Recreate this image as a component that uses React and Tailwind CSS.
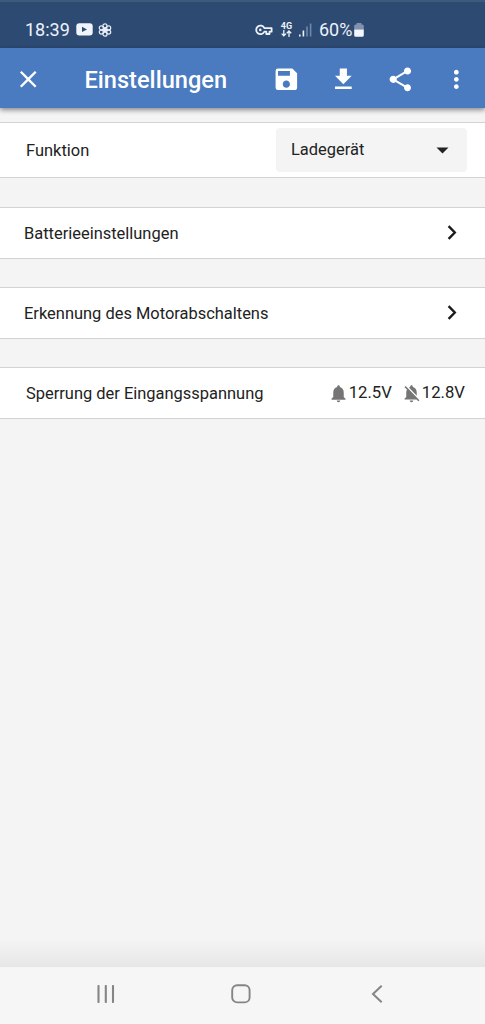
import React from 'react';
import { MdSave, MdGetApp, MdShare, MdMoreVert, MdClose, MdNotifications, MdNotificationsOff } from 'react-icons/md';

const YoutubeIcon = () => (
  <svg width="17" height="13" viewBox="0 0 17 13">
    <rect x="0.3" y="0.3" width="16.4" height="12.2" rx="3" fill="#f1f5fb" />
    <path d="M6 3.8v5.2l5-2.6z" fill="#2d4a73" />
  </svg>
);

const FlowerIcon = () => (
  <svg width="14" height="14" viewBox="0 0 14 14" fill="none" stroke="#e8eef7" strokeWidth="1.2">
    <circle cx="7" cy="2.8" r="2" />
    <circle cx="10.7" cy="4.9" r="2" />
    <circle cx="10.7" cy="9.1" r="2" />
    <circle cx="7" cy="11.2" r="2" />
    <circle cx="3.3" cy="9.1" r="2" />
    <circle cx="3.3" cy="4.9" r="2" />
    <circle cx="7" cy="7" r="1.6" fill="#e8eef7" />
  </svg>
);

const KeyIcon = () => (
  <svg width="18" height="12" viewBox="0 0 18 12" fill="none" stroke="#edf2fa" strokeWidth="1.8" strokeLinejoin="round">
    <path d="M9.4 4.1A4.3 4.3 0 1 0 9.4 7.7H11.3V10H14.5V7.7H16.6V4.1Z" />
    <circle cx="5.3" cy="5.9" r="1.3" fill="#edf2fa" stroke="none" />
  </svg>
);

const DataArrows = () => (
  <svg width="11" height="7" viewBox="0 0 11 7" fill="none" stroke="#edf2fa" strokeWidth="1.3">
    <path d="M2.8 0v5.8M0.6 3.6l2.2 2.3L5 3.6M8 7V1.1M5.8 3.3L8 1l2.2 2.3" />
  </svg>
);

const SignalIcon = () => (
  <svg width="13" height="14" viewBox="0 0 13 14">
    <rect x="0" y="11.5" width="1.6" height="2" fill="#edf2fa" />
    <rect x="3.6" y="7.5" width="1.6" height="6" fill="#edf2fa" />
    <rect x="7.2" y="3.5" width="1.6" height="10" fill="#7188ab" />
    <rect x="10.8" y="0.5" width="1.6" height="13" fill="#7188ab" />
  </svg>
);

const BatteryIcon = () => (
  <svg width="10" height="14" viewBox="0 0 10 14">
    <path d="M2.6 0h4.8v1.4H8.5Q9.8 1.4 9.8 2.9V6.8H0.2V2.9Q0.2 1.4 1.5 1.4h1.1z" fill="#8092af" />
    <path d="M0.2 6.6h9.6v5.7q0 1.5-1.5 1.5H1.7q-1.5 0-1.5-1.5z" fill="#f3f6fb" />
  </svg>
);

const ChevronIcon = () => (
  <svg className="mb-px" width="10" height="15" viewBox="0 0 10 15" fill="none" stroke="#1c1c1c" strokeWidth="2.4">
    <path d="M1.6 1.2L7.8 7.5l-6.2 6.3" />
  </svg>
);

const StatusBar = () => (
  <div className="h-12 bg-[#2d4a73] border-t-2 border-[#3d5a7c] flex items-center pt-[9px] pl-[25px] text-[#edf2fa] text-[18px] leading-none">
    <span className="w-[51px]">18:39</span>
    <YoutubeIcon />
    <span className="ml-[5px]"><FlowerIcon /></span>
    <span className="ml-[143px]"><KeyIcon /></span>
    <div className="ml-[7px] w-[13px] flex flex-col items-center">
      <span className="text-[9px] leading-[8px] font-bold">4G</span>
      <DataArrows />
    </div>
    <span className="ml-[6px] w-[20px]"><SignalIcon /></span>
    <span className="w-[35px]">60%</span>
    <BatteryIcon />
  </div>
);

const AppBar = () => (
  <header className="relative h-[60px] bg-[#4a7abf] text-white flex items-center pt-[3px] pl-[14px] pr-[14px] shadow-[0_2px_5px_rgba(0,0,0,0.45)]">
    <MdClose size={28.5} />
    <h1 className="ml-[42px] pt-[2px] flex-1 text-[23.6px] leading-none font-medium">Einstellungen</h1>
    <div className="flex items-center gap-[28px]">
      <MdSave size={28.7} />
      <MdGetApp size={28.7} />
      <MdShare size={28.7} />
      <MdMoreVert size={28.7} />
    </div>
  </header>
);

const Row = ({ label, children, className }) => (
  <div className={`bg-white border-y border-[#d3d3d3] flex items-center justify-between ${className}`}>
    <span className="pt-[2px]">{label}</span>
    {children}
  </div>
);

const NavBar = () => (
  <nav className="h-[57px] bg-[#f6f6f6] flex items-center justify-between pl-[97px] pr-[102px] pb-[3px]">
    <svg width="18" height="18" viewBox="0 0 18 18" stroke="#858585" strokeWidth="2.1" strokeLinecap="round">
      <path d="M1.5 1v16M8.8 1v16M16 1v16" />
    </svg>
    <svg className="mr-[4px]" width="20" height="20" viewBox="0 0 20 20" fill="none" stroke="#858585" strokeWidth="1.9">
      <rect x="1.2" y="1.2" width="17.4" height="17.2" rx="5" />
    </svg>
    <svg width="12" height="18" viewBox="0 0 12 18" fill="none" stroke="#858585" strokeWidth="2">
      <path d="M10.7 0.8L2 9l8.7 8.2" />
    </svg>
  </nav>
);

export default function App() {
  return (
    <div className="h-[1024px] w-full overflow-hidden flex flex-col bg-[#f4f4f4] font-['Roboto',sans-serif] text-[16.45px] leading-none text-[#222]">
      <StatusBar />
      <AppBar />
      <main className="flex-1 flex flex-col pt-[14px]">
        <Row label="Funktion" className="h-[56px] pl-[26px] pr-[18px]">
          <button className="w-[191px] h-[44px] rounded bg-[#f4f4f4] flex items-center justify-between pl-[15px] pr-[18px]">
            <span className="pt-px">Ladegerät</span>
            <svg width="13" height="7" viewBox="0 0 13 7" fill="#222">
              <path d="M0.5 0.5h12L6.5 6.5z" />
            </svg>
          </button>
        </Row>
        <div className="mt-[29px] flex flex-col gap-[28px]">
          <Row label="Batterieeinstellungen" className="h-[52px] pl-[24px] pr-[28px]">
            <ChevronIcon />
          </Row>
          <Row label="Erkennung des Motorabschaltens" className="h-[52px] pl-[24px] pr-[28px]">
            <ChevronIcon />
          </Row>
          <Row label="Sperrung der Eingangsspannung" className="h-[52px] pl-[26px] pr-[20px]">
            <div className="flex items-center text-[16.7px]">
              <MdNotifications size={21} className="text-[#757575]" />
              <span>12.5V</span>
              <MdNotificationsOff size={21} className="ml-[9px] text-[#757575]" />
              <span>12.8V</span>
            </div>
          </Row>
        </div>
      </main>
      <div className="h-[27px] bg-linear-to-b from-[#f4f4f4] to-[#e6e6e6]" />
      <NavBar />
    </div>
  );
}
